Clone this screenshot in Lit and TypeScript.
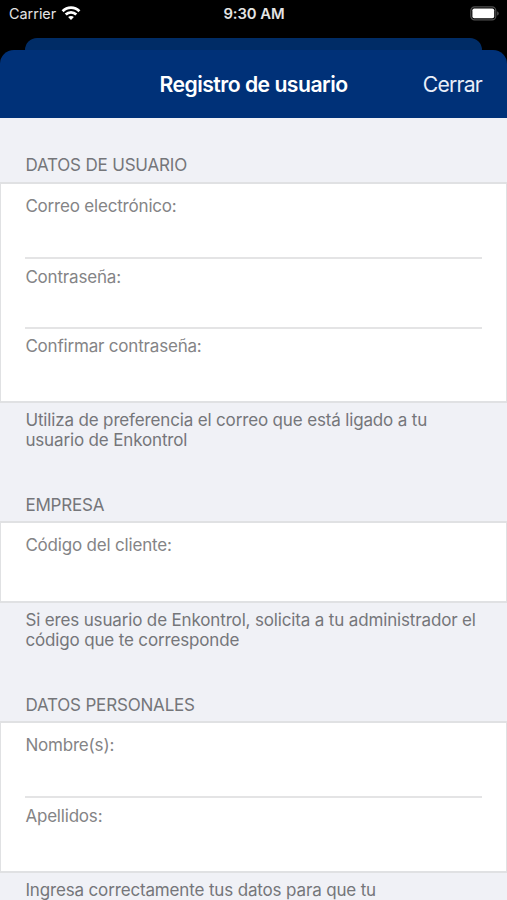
import { LitElement, html, css } from "lit";
import { customElement, property } from "lit/decorators.js";

interface Section {
  title: string;
  fields: string[];
  notes: string[];
}

const sections: Section[] = [
  {
    title: "DATOS DE USUARIO",
    fields: ["Correo electrónico:", "Contraseña:", "Confirmar contraseña:"],
    notes: ["Utiliza de preferencia el correo que está ligado a tu", "usuario de Enkontrol"],
  },
  {
    title: "EMPRESA",
    fields: ["Código del cliente:"],
    notes: ["Si eres usuario de Enkontrol, solicita a tu administrador el", "código que te corresponde"],
  },
  {
    title: "DATOS PERSONALES",
    fields: ["Nombre(s):", "Apellidos:"],
    notes: ["Ingresa correctamente tus datos para que tu"],
  },
];

@customElement("status-bar")
class StatusBar extends LitElement {
  static styles = css`
    :host {
      display: grid;
      grid-template-columns: 1fr auto 1fr;
      align-items: center;
      height: 27px;
      padding: 0 8px 0 9px;
      box-sizing: border-box;
      color: #e4e4e4;
      font-size: 14.4px;
    }
    .left { display: flex; align-items: center; gap: 5px; }
    .time { font-weight: 600; font-size: 14.8px; letter-spacing: -0.05px; }
    .right { display: flex; justify-content: flex-end; }
    svg { display: block; }
    .wifi { margin-top: -1px; }
  `;
  render() {
    return html`
      <div class="left">
        <span>Carrier</span>
        <svg class="wifi" width="20" height="16" viewBox="0 0 20 16" fill="none" stroke="#fff" stroke-width="2.8">
          <path d="M1.6 6.2C6.3 1.4 13.7 1.4 18.4 6.2" />
          <path d="M4.7 9.6C7.7 6.7 12.3 6.7 15.3 9.6" />
          <path d="M10 15L7.1 12.1C8.7 10.6 11.3 10.6 12.9 12.1Z" fill="#fff" stroke="none" />
        </svg>
      </div>
      <span class="time">9:30 AM</span>
      <div class="right">
        <svg width="29" height="15" viewBox="0 0 29 15">
          <rect x="0.8" y="0.9" width="25" height="13" rx="3.8" fill="none" stroke="#505050" stroke-width="1.2" />
          <rect x="2.4" y="2.5" width="21.8" height="9.8" rx="1.8" fill="#fff" />
          <path d="M27.1 5.2C29.3 6.1 29.3 8.7 27.1 9.6Z" fill="#505050" />
        </svg>
      </div>
    `;
  }
}

@customElement("form-section")
class FormSection extends LitElement {
  @property({ attribute: false }) section!: Section;
  static styles = css`
    :host { display: block; white-space: nowrap; }
    .title, .field, .note { box-sizing: border-box; font-size: 17px; }
    .title {
      display: flex;
      align-items: flex-end;
      height: 64px;
      padding: 0 25.4px 6px;
      line-height: 22px;
      letter-spacing: -0.18px;
      color: #75767a;
    }
    :host(:not(:first-of-type)) .title { height: 63px; padding-bottom: 5px; }
    .card { border: 2px solid #e0e1e3; border-left-width: 1px; border-right-width: 1px; background: #fff; padding: 0 24px; }
    .field {
      height: 70px;
      padding-top: 7px;
      border-bottom: 2px solid #e4e4e5;
      line-height: 22px;
      letter-spacing: -0.19px;
      color: #848486;
      text-indent: 0.4px;
    }
    .field:first-child { height: 75px; padding-top: 11px; }
    .field:last-child { height: 72px; border-bottom: 0; }
    .field:nth-child(3) { padding-top: 6px; }
    .field:nth-child(2):last-child { height: 73px; }
    .field:only-child { height: 78px; }
    .note { height: 55px; padding: 7px 25.4px 0; line-height: 20.4px; letter-spacing: -0.15px; color: #75767a; }
  `;
  render() {
    return html`
      <div class="title">${this.section.title}</div>
      <div class="card">${this.section.fields.map((f) => html`<div class="field">${f}</div>`)}</div>
      <div class="note">${this.section.notes.map((n) => html`<div>${n}</div>`)}</div>
    `;
  }
}

@customElement("app-root")
class AppRoot extends LitElement {
  static styles = css`
    :host {
      display: block;
      height: 900px;
      overflow: hidden;
      background: #000;
      font-family: Inter, "Liberation Sans", sans-serif;
    }
    .behind { height: 12px; margin: 11px 25px 0; border-radius: 12px 12px 0 0; background: #002c66; }
    .sheet { height: 850px; border-radius: 14px 14px 0 0; background: linear-gradient(#003178 68px, #f0f1f6 68px); }
    .bar {
      display: grid;
      grid-template-columns: 1fr auto 1fr;
      align-items: center;
      height: 68px;
      padding: 0 25px;
      color: #fff;
      white-space: nowrap;
    }
    .name { grid-column: 2; font-size: 21.2px; font-weight: 600; letter-spacing: -0.52px; }
    .close { justify-self: end; font-size: 21.2px; letter-spacing: -0.8px; color: #e9eef8; }
  `;
  render() {
    return html`
      <status-bar></status-bar>
      <div class="behind"></div>
      <div class="sheet">
        <div class="bar"><span class="name">Registro de usuario</span><span class="close">Cerrar</span></div>
        ${sections.map((s) => html`<form-section .section=${s}></form-section>`)}
      </div>
    `;
  }
}
